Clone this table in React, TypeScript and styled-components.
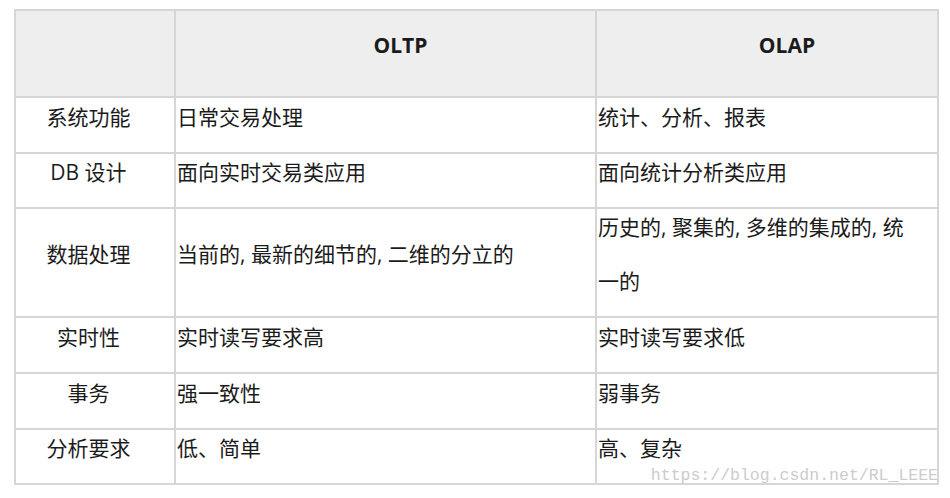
import React from "react";
import styled, { createGlobalStyle } from "styled-components";

const GlobalStyle = createGlobalStyle`
  html, body {
    margin: 0;
    padding: 0;
    background: #ffffff;
  }
  body {
    font-family: "Open Sans", "Noto Sans CJK SC", sans-serif;
    color: #1b1b1b;
  }
`;

const Page = styled.div`
  padding: 9px 0 0 14px;
`;

const Frame = styled.div`
  position: relative;
  width: 925px;
`;

const Table = styled.table`
  width: 925px;
  border-collapse: separate;
  border-spacing: 0;
  border-top: 2px solid #d6d6d6;
  border-left: 2px solid #d6d6d6;
  table-layout: fixed;
  font-size: 21px;
`;

const Cell = styled.td<{ $line: number; $lines: number }>`
  border-right: 2px solid #d6d6d6;
  border-bottom: 2px solid #d6d6d6;
  padding: 0 22px 0 1px;
  height: ${(p) => p.$line * p.$lines}px;
  line-height: ${(p) => p.$line}px;
  vertical-align: middle;
  text-align: left;
  overflow: hidden;
`;

const LabelCell = styled(Cell)`
  padding: 0 13px 0 0;
  text-align: center;
`;

const HeadCell = styled.th<{ $shift: number }>`
  background: #eeeeee;
  border-right: 2px solid #d6d6d6;
  border-bottom: 2px solid #d6d6d6;
  height: 85px;
  padding: 0 0 0 ${(p) => p.$shift}px;
  font-weight: 700;
  font-size: 21px;
  text-align: center;
  vertical-align: middle;
`;

const Text = styled.span`
  display: inline-block;
  transform: translateY(-8px);
`;

const HeadText = styled(Text)`
  transform: translateY(-9px);
`;

const Watermark = styled.div`
  position: absolute;
  right: 1px;
  bottom: 1px;
  font-family: "Liberation Mono", monospace;
  font-size: 16.5px;
  line-height: 1;
  color: #cccccc;
  pointer-events: none;
`;

interface Row {
  label: string;
  oltp: string;
  olap: string;
  line: number;
  lines: number;
}

const rows: Row[] = [
  { label: "系统功能", oltp: "日常交易处理", olap: "统计、分析、报表", line: 54, lines: 1 },
  { label: "DB 设计", oltp: "面向实时交易类应用", olap: "面向统计分析类应用", line: 53, lines: 1 },
  {
    label: "数据处理",
    oltp: "当前的, 最新的细节的, 二维的分立的",
    olap: "历史的, 聚集的, 多维的集成的, 统一的",
    line: 53.5,
    lines: 2,
  },
  { label: "实时性", oltp: "实时读写要求高", olap: "实时读写要求低", line: 54, lines: 1 },
  { label: "事务", oltp: "强一致性", olap: "弱事务", line: 54, lines: 1 },
  { label: "分析要求", oltp: "低、简单", olap: "高、复杂", line: 53, lines: 1 },
];

export default function App() {
  return (
    <Page>
      <GlobalStyle />
      <Frame>
        <Table>
          <colgroup>
            <col style={{ width: 160 }} />
            <col style={{ width: 421 }} />
            <col style={{ width: 342 }} />
          </colgroup>
          <thead>
            <tr>
              <HeadCell $shift={0} />
              <HeadCell $shift={30}>
                <HeadText>OLTP</HeadText>
              </HeadCell>
              <HeadCell $shift={40}>
                <HeadText>OLAP</HeadText>
              </HeadCell>
            </tr>
          </thead>
          <tbody>
            {rows.map((r) => (
              <tr key={r.label}>
                <LabelCell $line={r.line} $lines={r.lines}>
                  <Text>{r.label}</Text>
                </LabelCell>
                <Cell $line={r.line} $lines={r.lines}>
                  <Text>{r.oltp}</Text>
                </Cell>
                <Cell $line={r.line} $lines={r.lines}>
                  <Text>{r.olap}</Text>
                </Cell>
              </tr>
            ))}
          </tbody>
        </Table>
        <Watermark>https://blog.csdn.net/RL_LEEE</Watermark>
      </Frame>
    </Page>
  );
}
